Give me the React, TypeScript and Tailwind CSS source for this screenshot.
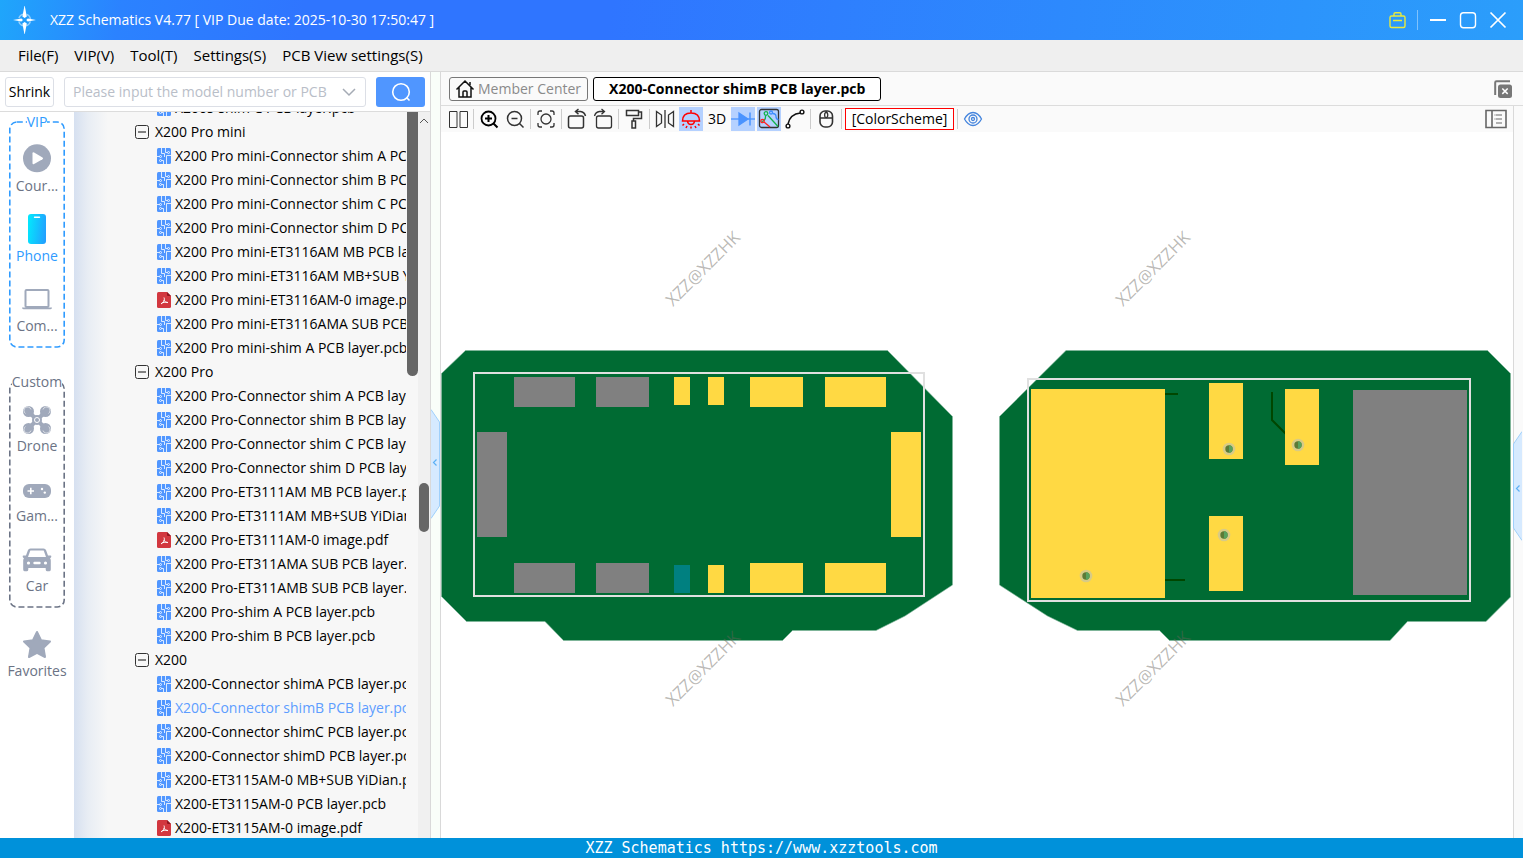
import type {ReactNode} from 'react';

type TreeRow = {
  kind: 'group' | 'pcb' | 'pdf';
  label: string;
  active?: boolean;
};

const rows: TreeRow[] = [
  {kind: 'pcb', label: 'X200s-shim C PCB layer.pcb'},
  {kind: 'group', label: 'X200 Pro mini'},
  {kind: 'pcb', label: 'X200 Pro mini-Connector shim A PCB layer.pcb'},
  {kind: 'pcb', label: 'X200 Pro mini-Connector shim B PCB layer.pcb'},
  {kind: 'pcb', label: 'X200 Pro mini-Connector shim C PCB layer.pcb'},
  {kind: 'pcb', label: 'X200 Pro mini-Connector shim D PCB layer.pcb'},
  {kind: 'pcb', label: 'X200 Pro mini-ET3116AM MB PCB layer.pcb'},
  {kind: 'pcb', label: 'X200 Pro mini-ET3116AM MB+SUB YiDian.pcb'},
  {kind: 'pdf', label: 'X200 Pro mini-ET3116AM-0 image.pdf'},
  {kind: 'pcb', label: 'X200 Pro mini-ET3116AMA SUB PCB layer.pcb'},
  {kind: 'pcb', label: 'X200 Pro mini-shim A PCB layer.pcb'},
  {kind: 'group', label: 'X200 Pro'},
  {kind: 'pcb', label: 'X200 Pro-Connector shim A PCB layer.pcb'},
  {kind: 'pcb', label: 'X200 Pro-Connector shim B PCB layer.pcb'},
  {kind: 'pcb', label: 'X200 Pro-Connector shim C PCB layer.pcb'},
  {kind: 'pcb', label: 'X200 Pro-Connector shim D PCB layer.pcb'},
  {kind: 'pcb', label: 'X200 Pro-ET3111AM MB PCB layer.pcb'},
  {kind: 'pcb', label: 'X200 Pro-ET3111AM MB+SUB YiDian.pcb'},
  {kind: 'pdf', label: 'X200 Pro-ET3111AM-0 image.pdf'},
  {kind: 'pcb', label: 'X200 Pro-ET311AMA SUB PCB layer.pcb'},
  {kind: 'pcb', label: 'X200 Pro-ET311AMB SUB PCB layer.pcb'},
  {kind: 'pcb', label: 'X200 Pro-shim A PCB layer.pcb'},
  {kind: 'pcb', label: 'X200 Pro-shim B PCB layer.pcb'},
  {kind: 'group', label: 'X200'},
  {kind: 'pcb', label: 'X200-Connector shimA PCB layer.pcb'},
  {kind: 'pcb', label: 'X200-Connector shimB PCB layer.pcb', active: true},
  {kind: 'pcb', label: 'X200-Connector shimC PCB layer.pcb'},
  {kind: 'pcb', label: 'X200-Connector shimD PCB layer.pcb'},
  {kind: 'pcb', label: 'X200-ET3115AM-0 MB+SUB YiDian.pcb'},
  {kind: 'pcb', label: 'X200-ET3115AM-0 PCB layer.pcb'},
  {kind: 'pdf', label: 'X200-ET3115AM-0 image.pdf'},
];

const menus = ['File(F)', 'VIP(V)', 'Tool(T)', 'Settings(S)', 'PCB View settings(S)'];

function TitleBar() {
  return (
    <header className="flex h-10 shrink-0 items-center bg-[linear-gradient(100deg,#1fa6fb_0%,#2b82ff_8%,#2f75ff_20%,#2f75ff_40%,#2b9efb_100%)] pl-3 pr-[15px] text-white">
      <svg className="h-7 w-7" viewBox="0 0 28 28" fill="#fff">
        <path d="M12.6 -1 14.8 10.6 12.6 12 10.4 10.6ZM12.6 29 14.8 17.4 12.6 16 10.4 17.4ZM1 14 9.4 12.4 11 14 9.4 15.6ZM24 14 15.8 12.4 14.2 14 15.8 15.6Z" />
        <circle cx="12.6" cy="14" r="6" fill="none" stroke="#fff" strokeOpacity=".5" strokeWidth="1.4" strokeDasharray="6 3.4" strokeDashoffset="-1.5" />
      </svg>
      <h1 className="ml-[10px] text-sm">XZZ Schematics V4.77 [ VIP Due date: 2025-10-30 17:50:47 ]</h1>
      <div className="ml-auto flex items-center gap-[10px]">
        <button aria-label="Toolbox">
          <svg className="h-5 w-5" viewBox="0 0 20 20" fill="none" stroke="#e9ea3e" strokeWidth="1.4">
            <rect x="3" y="6" width="15" height="11.5" rx="1.5" />
            <path d="M7 6V4q0-1.300 1.300-1.300h4.400q1.300 0 1.300 1.300v2M6 10.500h9" />
          </svg>
        </button>
        <span className="h-5 w-px bg-white/40" />
        <button aria-label="Minimize">
          <svg className="h-5 w-5" viewBox="0 0 20 20" stroke="#fff" strokeWidth="2">
            <path d="M2 10h16" />
          </svg>
        </button>
        <button aria-label="Maximize">
          <svg className="h-5 w-5" viewBox="0 0 20 20" fill="none" stroke="#fff" strokeWidth="1.400">
            <rect x="2.500" y="2.700" width="15" height="15" rx="3" />
          </svg>
        </button>
        <button aria-label="Close">
          <svg className="h-5 w-5" viewBox="0 0 20 20" stroke="#fff" strokeWidth="1.700">
            <path d="M2.500 2.500l15 15M17.500 2.500l-15 15" />
          </svg>
        </button>
      </div>
    </header>
  );
}

function MenuBar() {
  return (
    <nav className="flex h-8 shrink-0 items-center gap-4 border-b border-[#dadada] bg-[#efefef] px-[18px] text-[15px]">
      {menus.map((m) => (
        <button key={m}>{m}</button>
      ))}
    </nav>
  );
}

function SearchRow() {
  return (
    <div className="flex h-10 shrink-0 items-center border-b border-[#dcdcdc] bg-white pl-[5px] pr-[5px]">
      <button className="h-[30px] w-[49px] rounded-[3px] border border-[#dcdfe6] bg-white">Shrink</button>
      <label className="ml-[10px] flex h-[30px] min-w-0 flex-1 items-center rounded-[3px] border border-[#dcdfe6] pl-2 pr-2">
        <input
          className="min-w-0 flex-1 outline-none placeholder:text-[#b9bec8]"
          aria-label="Search model"
          placeholder="Please input the model number or PCB number"
        />
        <svg className="ml-3 h-4 w-4" viewBox="0 0 16 16" fill="none" stroke="#a5abb5" strokeWidth="1.500">
          <path d="M2 5l6 6 6-6" />
        </svg>
      </label>
      <button className="ml-[10px] flex h-[30px] w-[49px] items-center justify-center rounded-[3px] bg-[#5096ff]" aria-label="Search">
        <svg className="h-5 w-5" viewBox="0 0 20 20" fill="none" stroke="#fff" strokeWidth="1.600">
          <circle cx="10" cy="10" r="8.300" />
          <path d="M15.500 15.500l3 3" />
        </svg>
      </button>
    </div>
  );
}

const playIcon = (
  <svg className="h-[30px] w-[30px]" viewBox="0 0 30 30" fill="#a0a9bb">
    <circle cx="15" cy="14.300" r="14" />
    <path d="M10.500 9.500q0-1.800 1.600-1l8.400 4.900q1.300.9 0 1.800l-8.400 4.900q-1.600.800-1.600-1z" fill="#fff" />
  </svg>
);

const phoneIcon = (
  <svg className="h-[30px] w-[30px]" viewBox="0 0 30 30">
    <defs>
      <linearGradient id="phone" x1="0" x2="1" y1=".4" y2=".6">
        <stop offset="0" stopColor="#04e6fd" />
        <stop offset="1" stopColor="#22a0ff" />
      </linearGradient>
    </defs>
    <rect x="6" y="0" width="18" height="30" rx="3" fill="url(#phone)" />
    <path d="M12.500 3.300h5" stroke="#fff" strokeWidth="1.400" strokeLinecap="round" />
  </svg>
);

const laptopIcon = (
  <svg className="h-[30px] w-[30px]" viewBox="0 0 30 30" fill="none" stroke="#a0a9bb">
    <rect x="3.500" y="6" width="23" height="17" rx="1" strokeWidth="2" />
    <path d="M0 23.500h30q0 1.800-1.500 1.800h-27q-1.500 0-1.500-1.800z" fill="#a0a9bb" stroke="none" />
  </svg>
);

const droneIcon = (
  <svg className="h-[30px] w-[30px]" viewBox="0 0 30 30">
    <g fill="#a0a9bb">
      <circle cx="6.500" cy="7.500" r="5.500" />
      <circle cx="23.500" cy="7.500" r="5.500" />
      <circle cx="6.500" cy="24.500" r="5.500" />
      <circle cx="23.500" cy="24.500" r="5.500" />
      <circle cx="15" cy="16" r="5" />
    </g>
    <path d="M6.500 7.500l17 17M23.500 7.500l-17 17" stroke="#a0a9bb" strokeWidth="4" />
    <g fill="none" stroke="#fff" strokeWidth=".6">
      <path d="M3.500 9.500a3.600 3.600 0 1 1 5.500-4M26.500 9.500a3.600 3.600 0 1 0-5.500-4M3.500 22.500a3.600 3.600 0 1 0 5.500 4M26.500 22.500a3.600 3.600 0 1 1-5.500 4" />
      <circle cx="15" cy="16" r="2.500" strokeWidth="1" />
    </g>
  </svg>
);

const gameIcon = (
  <svg className="h-[30px] w-[30px]" viewBox="0 0 30 30">
    <rect x="1" y="10" width="28" height="14" rx="6" fill="#a0a9bb" />
    <path d="M5.500 17h6.500M8.800 13.800v6.500" stroke="#fff" strokeWidth="1.600" />
    <circle cx="20" cy="15" r="1.200" fill="#fff" />
    <circle cx="22.800" cy="18.600" r="1.200" fill="#fff" />
  </svg>
);

const carIcon = (
  <svg className="h-[30px] w-[30px]" viewBox="0 0 30 30">
    <path
      d="M8.500 4.500h13q2 0 2.600 1.800L26 11.500h2.500q1 0 .8 1.200t-1.300 1.200q.8 1 .8 2.500v9q0 1.800-1.300 1.800H25q-1.300 0-1.300-1.600V24H6.300v1.600q0 1.600-1.300 1.600H2.500q-1.300 0-1.300-1.800v-9q0-1.500.800-2.500-1.100 0-1.300-1.200t.8-1.200H4l1.900-5.200Q6.500 4.500 8.500 4.500z"
      fill="#a0a9bb"
    />
    <path d="M8.300 6.500h13.400l2.300 6.500H6z" fill="#fff" />
    <circle cx="6.500" cy="19" r="1.600" fill="#fff" />
    <circle cx="23.500" cy="19" r="1.600" fill="#fff" />
    <path d="M12.500 19h5" stroke="#fff" strokeWidth="2.400" strokeLinecap="round" />
  </svg>
);

const starIcon = (
  <svg className="h-[30px] w-[30px]" viewBox="0 0 30 30">
    <path
      d="M15 3l4 8.200 9 1.300-6.500 6.400L23 28l-8-4.200L7 28l1.500-9.100L2 12.500l9-1.300z"
      fill="#a0a9bb"
      stroke="#a0a9bb"
      strokeWidth="2"
      strokeLinejoin="round"
    />
  </svg>
);

function SideItem({icon, label, active}: {icon: ReactNode; label: string; active?: boolean}) {
  return (
    <button className={`flex h-[70px] w-full flex-col items-center gap-[2px] pt-[6px] ${active ? 'text-[#2f9bff]' : 'text-[#6b7385]'}`}>
      {icon}
      <span className="leading-5">{label}</span>
    </button>
  );
}

function SideGroup({title, tone, children}: {title: string; tone: 'blue' | 'slate'; children: ReactNode}) {
  return (
    <section className={`relative mx-[9px] flex flex-col items-center ${tone === 'blue' ? 'text-[#2f9bff]' : 'text-[#6b7385]'}`}>
      <div className="absolute inset-x-0 bottom-px top-[10px]">
        <svg className="h-full w-full overflow-visible">
          <rect x=".8" y="0" width="54.400" height="100%" rx="7" fill="none" stroke="currentColor" strokeWidth="1.600" strokeDasharray="6 3" />
        </svg>
      </div>
      <h2 className="relative mb-[6px] bg-white leading-5">{title}</h2>
      <div className="relative w-full">{children}</div>
    </section>
  );
}

function Sidebar() {
  return (
    <aside className="flex w-[74px] shrink-0 flex-col bg-white">
      <SideGroup title="VIP" tone="blue">
        <SideItem icon={playIcon} label="Cour..." />
        <SideItem icon={phoneIcon} label="Phone" active />
        <SideItem icon={laptopIcon} label="Com..." />
      </SideGroup>
      <div className="h-6" />
      <SideGroup title="Custom" tone="slate">
        <SideItem icon={droneIcon} label="Drone" />
        <SideItem icon={gameIcon} label="Gam..." />
        <SideItem icon={carIcon} label="Car" />
      </SideGroup>
      <div className="h-[15px]" />
      <SideItem icon={starIcon} label="Favorites" />
    </aside>
  );
}

function PcbFileIcon() {
  return (
    <svg className="h-4 w-[14px] shrink-0" viewBox="0 0 14 16">
      <rect width="14" height="16" rx="1.500" fill="#5096ff" />
      <g fill="none" stroke="#fff" strokeWidth=".8">
        <path d="M4.500 0v5.500h3V9M8.500 0v4.500h2M14 7.500H9.500V16M0 8.500h2.500M4.500 12.500h2V16" />
        <circle cx="11.500" cy="4.500" r="1" />
        <circle cx="3.500" cy="8.500" r="1" />
        <circle cx="3.500" cy="12.500" r="1" />
      </g>
    </svg>
  );
}

function PdfFileIcon() {
  return (
    <svg className="h-4 w-[14px] shrink-0" viewBox="0 0 14 16">
      <path d="M1.500 0H10l4 4v10.500q0 1.500-1.500 1.500h-11Q0 16 0 14.500v-13Q0 0 1.500 0z" fill="#d2373f" />
      <path d="M10 0l4 4h-3q-1 0-1-1z" fill="#8f1620" />
      <path d="M7 5.500c.8 2 .4 4-3 6.500M6.800 8c1 2 2.500 2.600 4.200 2.600M4.500 11.300c1.500-1 3.500-1.300 6-1" fill="none" stroke="#fff" strokeWidth="1" />
    </svg>
  );
}

function FileTree() {
  return (
    <div className="relative min-w-0 flex-1 overflow-hidden bg-[linear-gradient(90deg,#d6e0f0_0px,#e8edf4_14px,#f7f7f7_34px)] pr-3">
      {/* the list is scrolled part of a row down */}
      <ul className="-mt-4">
        {rows.map((r) => (
          <li key={r.label} className={`flex h-6 items-center overflow-hidden whitespace-nowrap ${r.kind === 'group' ? 'gap-[6px] pl-[61px]' : 'gap-1 pl-[83px]'}`}>
            {r.kind === 'group' && (
              <svg className="h-[14px] w-[14px] shrink-0" viewBox="0 0 14 14" fill="none" stroke="#333">
                <rect x=".5" y=".5" width="13" height="13" rx="2" />
                <path d="M3 7h8" strokeWidth="1.200" />
              </svg>
            )}
            {r.kind === 'pcb' && <PcbFileIcon />}
            {r.kind === 'pdf' && <PdfFileIcon />}
            <span className={r.active ? 'text-[#5d9dff]' : ''}>{r.label}</span>
          </li>
        ))}
      </ul>
      <div className="absolute right-0 top-0 h-[264px] w-[11px] rounded-b-full bg-[#666]" />
    </div>
  );
}

function LeftPanel() {
  return (
    <div className="flex w-[430px] shrink-0 flex-col">
      <SearchRow />
      <div className="flex min-h-0 flex-1 overflow-hidden">
        <Sidebar />
        <FileTree />
        <div className="flex w-3 shrink-0 flex-col items-center bg-[#f0f0f0]">
          <svg className="h-[18px] w-[10px]" viewBox="0 0 10 18" fill="none" stroke="#555">
            <path d="M1 11l4-4 4 4" />
          </svg>
          <div className="mt-[353px] h-[49px] w-[10px] rounded-full bg-[#666]" />
        </div>
      </div>
    </div>
  );
}

function Splitter() {
  return (
    <div className="relative w-[11px] shrink-0 border-x border-[#d9d9d9] bg-[#f9fef9]">
      <button className="absolute left-0 top-[337px]" aria-label="Collapse file list">
        <svg className="h-[110px] w-[9px]" viewBox="0 0 9 110" fill="#d6eaff" stroke="#9fd0fb">
          <path d="M0 .5L8.500 13v84L0 109.500" />
          <path d="M5.500 50.500l-3 3 3 3" fill="none" stroke="#5cb0f5" strokeWidth="1.200" />
        </svg>
      </button>
    </div>
  );
}

function TabBar() {
  return (
    <div className="flex h-[34px] shrink-0 items-start gap-[5px] border-b border-[#dcdcdc] bg-[#fafafa] pl-2 pr-[11px] pt-[5px]">
      <button className="flex h-6 items-center gap-[3px] rounded-[3px] border border-[#777] pl-[5px] pr-[6px] text-[#8a8a8a]">
        <svg className="h-5 w-5" viewBox="0 0 20 20" fill="none" stroke="#111" strokeWidth="1.500">
          <path d="M1.500 10.500L10 2l8.500 8.500M4 8.500V18h12V8.500M8 18v-5q0-1 1-1h2q1 0 1 1v5" />
          <path d="M15 3v3" />
        </svg>
        Member Center
      </button>
      <button className="h-6 rounded-[3px] border border-black bg-white px-[15px] font-bold">X200-Connector shimB PCB layer.pcb</button>
      <button className="ml-auto mt-[3px]" aria-label="Close all tabs">
        <svg className="h-[18px] w-[18px]" viewBox="0 0 18 18">
          <path d="M1.200 15V2.500q0-1.300 1.300-1.300H16" fill="none" stroke="#777" strokeWidth="2" />
          <rect x="4" y="4.500" width="14" height="13.500" rx="2.500" fill="#777" />
          <path d="M8.300 8.500l5.400 5.400M13.700 8.500l-5.400 5.400" stroke="#fff" strokeWidth="1.500" />
        </svg>
      </button>
    </div>
  );
}

function Tool({label, active, children}: {label: string; active?: boolean; children: ReactNode}) {
  return (
    <button aria-label={label} className={`h-6 w-6 shrink-0 ${active ? 'bg-[#b5d1ff]' : ''}`}>
      <svg className="h-6 w-6" viewBox="0 0 24 24" fill="none" stroke="#333" strokeWidth="1.300">
        {children}
      </svg>
    </button>
  );
}

function Sep() {
  return <span className="mx-px h-5 w-px shrink-0 bg-[#ccc]" />;
}

function Toolbar() {
  return (
    <div className="flex h-[26px] shrink-0 items-center gap-[2px] bg-[#fafafa] pl-[5px] pr-[6px]">
      <Tool label="Split view">
        <path d="M3.500 4.500h7.500v16h-7.500zM14 4.500h7.500v16h-7.500z" strokeWidth="1" />
      </Tool>
      <Sep />
      <Tool label="Zoom in">
        <circle cx="11.500" cy="11.500" r="7" stroke="#000" strokeWidth="1.800" />
        <path d="M16.500 16.500l4 4M8 11.500h7M11.500 8v7" stroke="#000" strokeWidth="2" />
      </Tool>
      <Tool label="Zoom out">
        <circle cx="11.500" cy="11.500" r="7" strokeWidth="1.500" />
        <path d="M16.500 16.500l4 4M8.500 11.500h6" strokeWidth="1.500" />
      </Tool>
      <Sep />
      <Tool label="Fit to window">
        <circle cx="12" cy="12" r="5" />
        <path d="M4 8V6q0-2 2-2h2M16 4h2q2 0 2 2v2M20 16v2q0 2-2 2h-2M8 20H6q-2 0-2-2v-2" />
      </Tool>
      <Sep />
      <Tool label="Rotate left">
        <rect x="3.500" y="9" width="15" height="12" rx="2" strokeWidth="1.500" />
        <path d="M20.500 9q-1-4-5-4.500h-5M13.500 2L10.500 4.500l3 2.800" strokeWidth="1.500" />
      </Tool>
      <Tool label="Rotate right">
        <rect x="5.500" y="9" width="15" height="12" rx="2" />
        <path d="M3.500 9q1-4 5-4.500h5M10.500 2l3 2.500-3 2.800" />
      </Tool>
      <Sep />
      <Tool label="Paint">
        <path d="M4.500 3.500h12v5h-12zM16.500 5h3v6.500h-8V14M10 14h3.500v7H10z" strokeWidth="1.500" />
      </Tool>
      <Sep />
      <Tool label="Mirror">
        <path d="M3.500 4.500l5 3.500v8l-5 3.500zM20.500 4.500l-5 3.500v8l5 3.500zM12 3v18" />
      </Tool>
      <Tool label="Lamp" active>
        <g stroke="#f00">
          <path d="M12 3v3M3.500 14q0-8 8.500-8t8.500 8zM8.500 14.500q.5 3 3.500 3t3.500-3M5 17l-1.500 1.500M19 17l1.500 1.500M8 19l-1 2M16 19l1 2M12 19.500v2" strokeWidth="1.500" />
        </g>
      </Tool>
      <button className="h-6 w-6 shrink-0 text-center">3D</button>
      <Tool label="Diode" active>
        <path d="M0 12h24" stroke="#4a93ff" />
        <path d="M8 6l9 6-9 6z" fill="#4a93ff" stroke="#4a93ff" />
        <path d="M19 5.500v13" stroke="#4a93ff" strokeWidth="1.500" />
      </Tool>
      <Tool label="Nets" active>
        <rect x="2.500" y="2.500" width="19" height="18" rx="2" stroke="#333" />
        <path d="M11 8.500l10 11M8.500 8.500q.5 5-4 6" stroke="#12b34c" strokeWidth="1.300" />
        <circle cx="9" cy="6.500" r="1.800" stroke="#12b34c" />
        <path d="M15.500 6.500q3.500 0 3.500 3t2.500 3" stroke="#3b8cff" />
        <circle cx="14" cy="5.500" r="1.500" stroke="#3b8cff" />
        <path d="M7 15l6 5" stroke="#f22" strokeWidth="1.300" />
        <circle cx="5.500" cy="14" r="1.700" stroke="#f22" />
      </Tool>
      <Tool label="Curve">
        <path d="M5 17Q7 7 17.500 6" stroke="#111" strokeWidth="1.500" />
        <circle cx="5" cy="19" r="1.900" stroke="#111" strokeWidth="1.400" />
        <circle cx="19" cy="5" r="1.900" stroke="#111" strokeWidth="1.400" />
      </Tool>
      <Sep />
      <Tool label="Mouse">
        <rect x="6" y="4" width="12.500" height="16" rx="5" strokeWidth="1.600" />
        <path d="M6 11h12.500M12.200 4v2" strokeWidth="1.400" />
        <rect x="10.700" y="5.500" width="3" height="5" rx="1.500" />
      </Tool>
      <Sep />
      <button className="h-[22px] w-[109px] shrink-0 border border-[#f00] bg-white text-center leading-5">[ColorScheme]</button>
      <Sep />
      <Tool label="Show layers">
        <g stroke="#4585dd">
          <path d="M3.500 12Q7 5.500 12 5.500T20.500 12Q17 18.500 12 18.500T3.500 12z" />
          <circle cx="12" cy="12" r="4" />
          <circle cx="12" cy="12" r="1.500" />
        </g>
      </Tool>
      <button className="ml-auto" aria-label="Side panel">
        <svg className="h-5 w-[22px]" viewBox="0 0 22 20" fill="none" stroke="#666" strokeWidth="1.600">
          <path d="M1 1.500h20v17H1zM7 1.500v17" />
          <path d="M11 6h6M11 10h6M11 14h6M9.500 6h1M9.500 10h1" strokeWidth="1.200" />
        </svg>
      </button>
    </div>
  );
}

type Pad = [x: number, y: number, w: number, h: number, fill: string];

const GOLD = '#ffd943';
const GRAY = '#808080';

const pads: Pad[] = [
  [514, 377, 61, 30, GRAY],
  [596, 377, 53, 30, GRAY],
  [674, 377, 16, 28, GOLD],
  [708, 377, 16, 28, GOLD],
  [750, 377, 53, 30, GOLD],
  [825, 377, 61, 30, GOLD],
  [477, 432, 30, 105, GRAY],
  [891, 432, 30, 105, GOLD],
  [514, 563, 61, 30, GRAY],
  [596, 563, 53, 30, GRAY],
  [674, 565, 16, 28, '#008080'],
  [708, 565, 16, 28, GOLD],
  [750, 563, 53, 30, GOLD],
  [825, 563, 61, 30, GOLD],
  [1031, 389, 134, 209, GOLD],
  [1209, 383, 34, 76, GOLD],
  [1285, 389, 34, 76, GOLD],
  [1209, 516, 34, 75, GOLD],
  [1353, 390, 114, 205, GRAY],
];

const vias = [
  [1229, 449],
  [1298, 445],
  [1224, 535],
  [1086, 576],
];

const marks = [
  [673, 307],
  [1123, 307],
  [673, 707],
  [1123, 707],
];

function Board() {
  return (
    <svg className="h-full w-full" viewBox="441 132 1072 706">
      <g fill="#006b33" stroke="#7fb59a" strokeWidth=".6">
        <path d="M465.500 350.500h422l65 66V585L905 616l-29 14.500h-83.500l-10 10h-219L545 621.500h-78.500l-25-25v-223z" />
        <path d="M1066 350.500h421.500l23 23V597l-24.500 24.500h-78.500l-17.500 19h-220.500l-10-10h-82L1047.500 616l-48-31V416.500z" />
      </g>
      <path d="M1165 394h13M1165 580h20M1272 392v28l14 14" fill="none" stroke="#004600" strokeWidth="2" />
      {pads.map(([x, y, w, h, fill]) => (
        <rect key={`${x}-${y}`} x={x} y={y} width={w} height={h} fill={fill} />
      ))}
      <rect x="474" y="373" width="450" height="223" fill="none" stroke="#e0e0e0" strokeWidth="2" />
      <rect x="1028" y="379" width="442" height="222" fill="none" stroke="#e0e0e0" strokeWidth="2" />
      {vias.map(([x, y]) => (
        <g key={`${x}-${y}`}>
          <circle cx={x} cy={y} r="6.300" fill="#d8cb86" />
          <circle cx={x} cy={y} r="3.700" fill="#5b7a36" />
          <path d={`M${x} ${y - 3.7}a3.700 3.700 0 0 1 0 7.400z`} fill="#58a25d" />
        </g>
      ))}
      <g fill="#66645c" fillOpacity=".45" fontSize="17">
        {marks.map(([x, y]) => (
          <text key={`${x}-${y}`} transform={`translate(${x} ${y}) rotate(-45)`}>
            XZZ@XZZHK
          </text>
        ))}
      </g>
    </svg>
  );
}

function RightRail() {
  return (
    <div className="relative w-[10px] shrink-0 border-l border-[#d9d9d9] bg-[#fafafa]">
      <button className="absolute -left-px top-[325px]" aria-label="Expand panel">
        <svg className="h-[110px] w-[9px]" viewBox="0 0 9 110" fill="#d6eaff" stroke="#9fd0fb">
          <path d="M9 .5L.5 13v84L9 109.500" />
          <path d="M6.500 54.500l-3 3 3 3" fill="none" stroke="#5cb0f5" strokeWidth="1.200" />
        </svg>
      </button>
    </div>
  );
}

export default function App() {
  return (
    <div className="flex h-screen flex-col overflow-hidden bg-white font-['Open_Sans','Noto_Sans',sans-serif] text-sm text-black">
      <TitleBar />
      <MenuBar />
      <main className="flex min-h-0 flex-1">
        <LeftPanel />
        <Splitter />
        <div className="flex min-w-0 flex-1 flex-col">
          <TabBar />
          <div className="flex min-h-0 flex-1">
            <div className="flex min-w-0 flex-1 flex-col">
              <Toolbar />
              <div className="min-h-0 flex-1 bg-white">
                <Board />
              </div>
            </div>
            <RightRail />
          </div>
        </div>
      </main>
      <footer className="h-5 shrink-0 bg-[#0091da] text-center font-['DejaVu_Sans_Mono',monospace] text-[15px] leading-5 text-white">
        XZZ Schematics https://www.xzztools.com
      </footer>
    </div>
  );
}
